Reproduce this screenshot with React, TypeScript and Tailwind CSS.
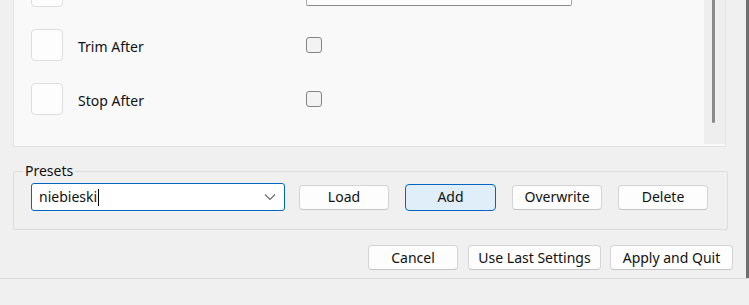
import React from "react";

const font = { fontFamily: '"Noto Sans", "Open Sans", sans-serif' };

function Btn({ label, w, primary }: { label: string; w: string; primary?: boolean }) {
  return (
    <div
      className={
        "flex items-center justify-center rounded-[4px] text-[14px] leading-none text-[#111111] " +
        w +
        (primary
          ? " h-[27px] bg-[#e0eef9] border border-[#0067c0]"
          : " h-[25px] bg-[#fdfdfd] border border-[#d4d4d4] border-b-[#c4c4c4]")
      }
    >
      {label}
    </div>
  );
}

function Row({ label, top }: { label?: string; top?: boolean }) {
  return (
    <div className="flex items-center h-[32px]">
      <div className="w-[32px] h-[32px] rounded-[4px] bg-[#fdfdfd] border border-[#dedede]" />
      <div className="w-[243px] pl-[15px] pt-[2px] text-[14px] text-[#111111]">{label}</div>
      {top ? (
        <div className="w-[266px] h-[30px] bg-[#fdfdfd] border border-[#a8a8a8] border-b-[#8a8a8a] rounded-[2px]" />
      ) : (
        <div className="w-[16px] h-[16px] rounded-[3px] bg-[#f3f3f3] border border-[#858585]" />
      )}
    </div>
  );
}

export default function App() {
  return (
    <div className="relative w-[749px] h-[305px] bg-[#f0f0f0] overflow-hidden flex flex-col" style={font}>
      <div className="absolute right-0 top-0 w-[3px] h-[278px] bg-[#6e6e6e]" />

      <div className="ml-[13px] mt-[-40px] w-[713px] h-[187px] bg-[#f9f9f9] border border-[#e3e3e3] flex shrink-0">
        <div className="flex-1 pl-[17px] pt-[14px] flex flex-col gap-[22px]">
          <Row top />
          <Row label="Trim After" />
          <Row label="Stop After" />
        </div>
        <div className="w-[21px] mb-[2px] bg-[#eeeeee] flex flex-col">
          <div className="ml-[8px] mt-[12px] w-[3px] h-[150px] rounded-[2px] bg-[#8a8a8a]" />
        </div>
      </div>

      <div className="relative ml-[13px] mt-[24px] w-[715px] h-[59px] border border-[#dcdcdc] rounded-[2px] shrink-0 flex items-start pl-[17px] pt-[11px]">
        <span className="absolute left-[9px] top-[-11px] px-[2px] bg-[#f0f0f0] text-[14px] leading-[20px] text-[#111111]">
          Presets
        </span>
        <div className="flex items-center h-[28px]">
          <div className="w-[254px] h-[28px] bg-white border border-[#0067c0] rounded-[3px] flex items-center pl-[7px] pr-[6px]">
            <span className="text-[14px] text-[#111111] leading-none">niebieski</span>
            <span className="ml-[1px] w-[1px] h-[17px] bg-black" />
            <div className="flex-1" />
            <svg width="12" height="8" viewBox="0 0 12 8" className="mr-[2px]">
              <path d="M1 1.5 L6 6.5 L11 1.5" fill="none" stroke="#6a6a6a" strokeWidth="1.1" />
            </svg>
          </div>
          <div className="ml-[14px] flex items-center gap-[16px]">
            <Btn label="Load" w="w-[90px]" />
            <Btn label="Add" w="w-[91px]" primary />
            <Btn label="Overwrite" w="w-[90px]" />
            <Btn label="Delete" w="w-[90px]" />
          </div>
        </div>
      </div>

      <div className="mt-[15px] mr-[16px] flex justify-end items-center shrink-0">
        <Btn label="Cancel" w="w-[90px]" />
        <div className="w-[10px]" />
        <Btn label="Use Last Settings" w="w-[133px]" />
        <div className="w-[9px]" />
        <Btn label="Apply and Quit" w="w-[123px]" />
      </div>

      <div className="mt-[8px] border-t border-[#dadada] flex-1 bg-[#f0f0f0]" />
    </div>
  );
}
